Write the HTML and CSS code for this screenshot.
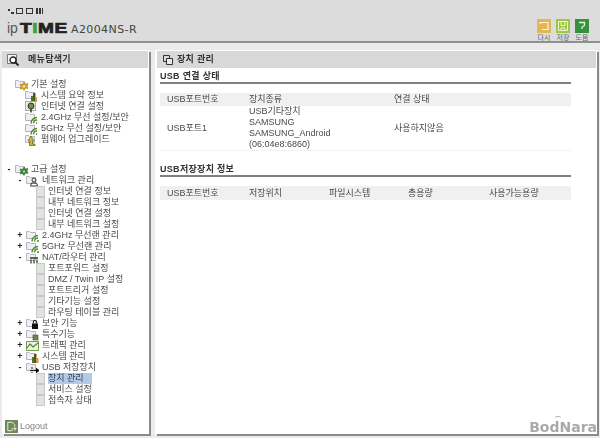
FILE: index.html
```html
<!DOCTYPE html>
<html lang="ko">
<head>
<meta charset="utf-8">
<title>ipTIME A2004NS-R</title>
<link rel="stylesheet" href="styles.css">
</head>
<body>
<svg class="sprites" width="0" height="0">
  <defs>
    <symbol id="leaf" viewBox="0 0 9 11"><rect x=".5" y=".5" width="8" height="10" fill="#e2e2e2" stroke="#c8c8c8"/></symbol>
    <symbol id="folder" viewBox="0 0 10 9"><path d="M.5 1.500h3l1 1h5v6h-9z" fill="#eeeef4" stroke="#b4b4be"/></symbol>
    <symbol id="wifi" viewBox="0 0 14 12"><use href="#folder" width="10" height="9"/><path d="M6 11.500a6 6 0 0 1 6-6M8.500 11.500a3.500 3.500 0 0 1 3.500-3.500" fill="none" stroke="#4d8a2c" stroke-width="1.400"/><circle cx="12" cy="11" r="1" fill="#4d8a2c"/></symbol>
    <symbol id="bars" viewBox="0 0 14 12"><use href="#folder" width="10" height="9"/><rect x="6" y="6" width="2" height="6" fill="#3f7d2a"/><rect x="8" y="3" width="2.500" height="9" fill="#6a4a1a"/><rect x="10.500" y="7" width="2" height="5" fill="#d0a020"/></symbol>
  </defs>
</svg>
<header class="top">
  <div class="brand">
    <div class="dots"><i class="d1"></i><i class="d2"></i><i class="d3"></i><i class="d4"></i><i class="d5"></i></div>
    <div class="logo"><span class="ip">ip</span><span class="time"><b>T<em>I</em>ME</b></span><span class="model">A2004NS-R</span></div>
  </div>
  <nav class="tools">
    <a class="tool"><svg width="14" height="14" viewBox="0 0 14 14"><rect width="14" height="14" fill="#e3b458"/><path d="M3 3.500h8v7H5" fill="none" stroke="#fff3d0" stroke-width="1.200"/><path d="M2 4h3" stroke="#fff3d0"/></svg><span>다시</span></a>
    <a class="tool"><svg width="14" height="14" viewBox="0 0 14 14"><rect width="14" height="14" fill="#9ec748"/><path d="M2.500 2.500h9v9h-9zM5 3v3.500h4V3M5 11.500V9h4v2.500" fill="none" stroke="#eef7d0"/></svg><span>저장</span></a>
    <a class="tool"><svg width="14" height="14" viewBox="0 0 14 14"><rect width="14" height="14" fill="#35923c"/><path d="M4 3.500h5.500v3L7 8v2" fill="none" stroke="#e6f5e0" stroke-width="1.300"/></svg><span>도움</span></a>
  </nav>
</header>
<main class="main">
  <aside class="panel side">
    <h2 class="bar"><svg class="bar-ico" width="14" height="14" viewBox="0 0 14 14"><path d="M1.500 1.500h9v9h-9z" fill="#f4f4f4" stroke="#777"/><circle cx="7" cy="7" r="3" fill="#fff" stroke="#222" stroke-width="1.300"/><path d="M9 9l3.500 3.500" stroke="#222" stroke-width="1.800"/></svg><span class="bar-t1">메뉴탐색기</span></h2>
    <div class="tree">
      <ul class="group g1">
        <li class="row l0"><span class="tg"></span><svg class="ic0" width="14" height="12" viewBox="0 0 14 12"><use href="#folder" width="10" height="9"/><path d="M9 3l1.500 2 2.500-.5-1 2.500 1 2.500-2.500-.5L9 11.500 7.500 9.500 5 10l1-2.500L5 5l2.500.5z" fill="#d8a818" stroke="#8a6a10" stroke-width=".5"/><circle cx="9" cy="7.500" r="1" fill="#fff"/></svg><span>기본 설정</span></li>
        <li class="row l1"><svg width="12" height="12"><use href="#bars" width="14" height="12"/></svg><span>시스템 요약 정보</span></li>
        <li class="row l1"><svg width="12" height="12" viewBox="0 0 12 12"><rect x=".5" y=".5" width="10" height="9" fill="#eee" stroke="#aaa"/><circle cx="6" cy="5" r="3" fill="#6a9a28" stroke="#333"/><path d="M6 8v3.500" stroke="#333" stroke-width="1.500"/></svg><span>인터넷 연결 설정</span></li>
        <li class="row l1"><svg width="12" height="12"><use href="#wifi" width="14" height="12"/></svg><span>2.4GHz 무선 설정/보안</span></li>
        <li class="row l1"><svg width="12" height="12"><use href="#wifi" width="14" height="12"/></svg><span>5GHz 무선 설정/보안</span></li>
        <li class="row l1"><svg width="12" height="12" viewBox="0 0 12 12"><use href="#folder" width="10" height="9"/><path d="M6 2l3 5H7.500v3H10v1.500H4.500V7H3z" fill="#d8b030" stroke="#3d6a20" stroke-width=".7"/></svg><span>펌웨어 업그레이드</span></li>
      </ul>
      <ul class="group g2">
        <li class="row l0"><span class="tg">-</span><svg class="ic0" width="14" height="12" viewBox="0 0 14 12"><use href="#folder" width="10" height="9"/><path d="M9 3l1.500 2 2.500-.5-1 2.500 1 2.500-2.500-.5L9 11.500 7.500 9.500 5 10l1-2.500L5 5l2.500.5z" fill="#3f8a3a" stroke="#1f5a20" stroke-width=".5"/><circle cx="9" cy="7.500" r="1" fill="#cde8c8"/></svg><span>고급 설정</span></li>
        <li class="row l1t"><span class="tg">-</span><svg width="13" height="12" viewBox="0 0 13 12"><use href="#folder" width="10" height="9"/><circle cx="8" cy="5" r="2" fill="none" stroke="#333"/><path d="M4.500 11l1-3h5l1 3z" fill="none" stroke="#333"/></svg><span>네트워크 관리</span></li>
        <li class="row l2"><svg class="leaf"><use href="#leaf"/></svg><span>인터넷 연결 정보</span></li>
        <li class="row l2"><svg class="leaf"><use href="#leaf"/></svg><span>내부 네트워크 정보</span></li>
        <li class="row l2"><svg class="leaf"><use href="#leaf"/></svg><span>인터넷 연결 설정</span></li>
        <li class="row l2"><svg class="leaf"><use href="#leaf"/></svg><span>내부 네트워크 설정</span></li>
        <li class="row l1t"><span class="tg">+</span><svg width="13" height="12"><use href="#wifi" width="14" height="12"/></svg><span>2.4GHz 무선랜 관리</span></li>
        <li class="row l1t"><span class="tg">+</span><svg width="13" height="12"><use href="#wifi" width="14" height="12"/></svg><span>5GHz 무선랜 관리</span></li>
        <li class="row l1t"><span class="tg">-</span><svg width="13" height="12" viewBox="0 0 13 12"><use href="#folder" width="10" height="9"/><path d="M4 6h8" stroke="#333" stroke-width="1.500"/><path d="M5 7.500v4M8 7.500v4M11 7.500v4" stroke="#3f6a30" stroke-width="1.500"/></svg><span>NAT/라우터 관리</span></li>
        <li class="row l2"><svg class="leaf"><use href="#leaf"/></svg><span>포트포워드 설정</span></li>
        <li class="row l2"><svg class="leaf"><use href="#leaf"/></svg><span>DMZ / Twin IP 설정</span></li>
        <li class="row l2"><svg class="leaf"><use href="#leaf"/></svg><span>포트트리거 설정</span></li>
        <li class="row l2"><svg class="leaf"><use href="#leaf"/></svg><span>기타기능 설정</span></li>
        <li class="row l2"><svg class="leaf"><use href="#leaf"/></svg><span>라우팅 테이블 관리</span></li>
        <li class="row l1t"><span class="tg">+</span><svg width="13" height="12" viewBox="0 0 13 12"><use href="#folder" width="10" height="9"/><rect x="6" y="5.500" width="6" height="5.500" fill="#111"/><path d="M7.300 5.500V4a1.700 1.700 0 0 1 3.400 0v1.500" fill="none" stroke="#111"/></svg><span>보안 기능</span></li>
        <li class="row l1t"><span class="tg">+</span><svg width="13" height="12" viewBox="0 0 13 12"><use href="#folder" width="10" height="9"/><rect x="7" y="6" width="5" height="5" fill="#6a8a50" stroke="#444" stroke-width=".6"/></svg><span>특수기능</span></li>
        <li class="row l1t"><span class="tg">+</span><svg width="13" height="12" viewBox="0 0 13 12"><rect x=".5" y="1.500" width="12" height="9" fill="#eef4e4" stroke="#7a9a50"/><path d="M1 8l3-4 3 3 5-4" fill="none" stroke="#3f8a2a" stroke-width="1.200"/></svg><span>트래픽 관리</span></li>
        <li class="row l1t"><span class="tg">+</span><svg width="13" height="12"><use href="#bars" width="14" height="12"/></svg><span>시스템 관리</span></li>
        <li class="row l1t"><span class="tg">-</span><svg width="13" height="12" viewBox="0 0 13 12"><use href="#folder" width="10" height="9"/><path d="M4 8.500h9" stroke="#222" stroke-width="1.300"/><path d="M10 6l3 2.500-3 2.500M6 7V5M6 10v1" stroke="#222"/></svg><span>USB 저장장치</span></li>
        <li class="row l2"><svg class="leaf"><use href="#leaf"/></svg><span class="sel">장치 관리</span></li>
        <li class="row l2"><svg class="leaf"><use href="#leaf"/></svg><span>서비스 설정</span></li>
        <li class="row l2"><svg class="leaf"><use href="#leaf"/></svg><span>접속자 상태</span></li>
      </ul>
    </div>
    <a class="logout"><svg width="13" height="13" viewBox="0 0 14 14"><rect width="14" height="14" fill="#6f8a58"/><path d="M3 2.500h5l2.500 2.500v2M3 2.500v9h5" fill="none" stroke="#eef4e4"/><path d="M7 9.500h5M10 7.500l2 2-2 2" fill="none" stroke="#eef4e4"/></svg><span>Logout</span></a>
  </aside>
  <section class="panel content">
    <h2 class="bar"><svg class="bar-ico2" width="12" height="12" viewBox="0 0 12 12"><path d="M1.500 1.500h6v6h-6z" fill="none" stroke="#333"/><path d="M4.500 4.500h6v6h-6z" fill="#e8e8e8" stroke="#333"/></svg><span class="bar-t2">장치 관리</span></h2>
    <div class="body">
      <h3 class="sub first">USB 연결 상태</h3>
      <div class="tbl t3 head"><span>USB포트번호</span><span>장치종류</span><span>연결 상태</span></div>
      <div class="tbl t3 data"><span>USB포트1</span><span class="device">USB기타장치<br>SAMSUNG<br>SAMSUNG_Android<br>(06:04e8:6860)</span><span>사용하지않음</span></div>
      <h3 class="sub second">USB저장장치 정보</h3>
      <div class="tbl t5 head"><span>USB포트번호</span><span>저장위치</span><span>파일시스템</span><span>총용량</span><span>사용가능용량</span></div>
    </div>
  </section>
</main>
<div class="mark">BodNara</div>
</body>
</html>
```
FILE: styles.css
```css
* { box-sizing: border-box; }
html, body { margin: 0; padding: 0; }
body {
  width: 600px; height: 438px; overflow: hidden; position: relative;
  background: #ebebeb; color: #4a4a4a;
  font-family: "Liberation Sans", "Noto Sans CJK KR", sans-serif;
  font-size: 9px; line-height: 11px;
  filter: blur(.3px);
}
.sprites { position: absolute; }
.top {
  height: 43px; background: #dcdcdc;
  border-bottom: 2px solid #8f8f8f;
  display: flex; justify-content: space-between;
  padding: 8px 11px 0 8px;
}
.dots { display: flex; align-items: center; height: 6px; }
.dots i { display: block; background: #333; flex: none; }
.dots .d1 { width: 2px; height: 2px; margin: -3px 1px 0 0; }
.dots .d2 { width: 3px; height: 2px; margin: 3px 2px 0 0; }
.dots .d3, .dots .d4 { width: 7px; height: 6px; background: none; border: 1.500px solid #333; margin-right: 3px; }
.dots .d5 { width: 7px; height: 6px; background: repeating-linear-gradient(90deg, #333 0 2px, transparent 2px 3px); }
.logo { display: flex; align-items: baseline; margin: 7px 0 0 -1px; height: 16px; color: #444; }
.ip { font-size: 14px; width: 13px; color: #555; line-height: 14px; }
.time { width: 51px; line-height: 14px; }
.time b { display: inline-block; font-size: 14px; font-weight: bold; color: #222; -webkit-text-stroke: .7px #222; letter-spacing: .4px; transform: scaleX(1.360); transform-origin: left; }
.time em { font-style: normal; color: #3aa04a; -webkit-text-stroke: .7px #3aa04a; }
.model { font-family: "DejaVu Sans", sans-serif; font-size: 11px; color: #444; letter-spacing: .4px; }
.tools { display: flex; gap: 5px; padding-top: 11px; }
.tool { display: flex; flex-direction: column; align-items: center; width: 14px; font-size: 7px; line-height: 9px; color: #666; white-space: nowrap; }
.tool svg { display: block; flex: none; }
.main { display: grid; grid-template-columns: 147px 442px; gap: 6px; padding: 7px 0 0 2px; height: 395px; }
.panel {
  background: #fff; height: 384px; padding: 1px 1px 0 2px;
  box-shadow: 2px 2px 0 #8a8a8a; display: flex; flex-direction: column;
}
.side { position: relative; padding: 1px 1px 0 0; }
.bar { margin: 0; height: 17px; background: #d8d8d8; font-size: 9px; font-weight: bold; color: #333; display: flex; align-items: center; flex: none; line-height: 11px; }
.bar-ico { margin-left: 4px; }
.bar-t1 { margin-left: 8px; letter-spacing: .3px; }
.bar-ico2 { margin-left: 5px; }
.bar-t2 { margin-left: 3px; letter-spacing: .3px; }
.tree { flex: 1; padding-left: 2px; }
.group { list-style: none; margin: 0; padding: 0; }
.g1 { padding-top: 11px; }
.g2 { padding-top: 19px; }
.row { height: 11px; display: flex; align-items: center; white-space: nowrap; }
.row svg { flex: none; }
.tg { width: 8px; font-size: 9px; font-weight: bold; color: #222; text-align: center; line-height: 9px; flex: none; }
.l0 { padding-left: 1px; }
.l0 .ic0 { margin: 0 2px 0 2px; }
.l1 { padding-left: 21px; }
.l1 svg { margin-right: 4px; }
.l1t { padding-left: 12px; }
.l1t svg { margin: 0 3px 0 2px; }
.l2 { padding-left: 32px; }
.leaf { width: 9px; height: 11px; margin-right: 3px; }
.sel { background: #b4c8e8; padding-right: 8px; color: #345; }
.logout { position: absolute; left: 3px; bottom: 1px; display: flex; align-items: center; gap: 2px; color: #808080; font-size: 9px; }
.body { padding: 0 25px 0 3px; }
.sub { margin: 0; font-size: 9px; font-weight: bold; color: #333; height: 16px; line-height: 16px; border-bottom: 2px solid #808080; letter-spacing: .3px; }
.first { margin-bottom: 9px; }
.second { margin-top: 10px; margin-bottom: 9px; }
.tbl { display: grid; align-items: center; padding-left: 7px; }
.t3 { grid-template-columns: 82px 145px 1fr; }
.t5 { grid-template-columns: 82px 80px 79px 81px 1fr; }
.head { height: 14px; background: #f0f0f0; }
.t3.head { height: 13px; }
.data { height: 45px; border-bottom: 1px solid #f2f2f2; }
.device { display: block; }
.mark { position: absolute; right: 3px; bottom: 3px; font-family: "DejaVu Sans", sans-serif; font-weight: bold; font-size: 14px; line-height: 15px; color: #a9a9a9; }
.mark::before { content: ""; position: absolute; left: 26px; top: -4px; width: 6px; height: 3px; border-top: 1px solid #a9a9a9; border-radius: 50%; }
```
